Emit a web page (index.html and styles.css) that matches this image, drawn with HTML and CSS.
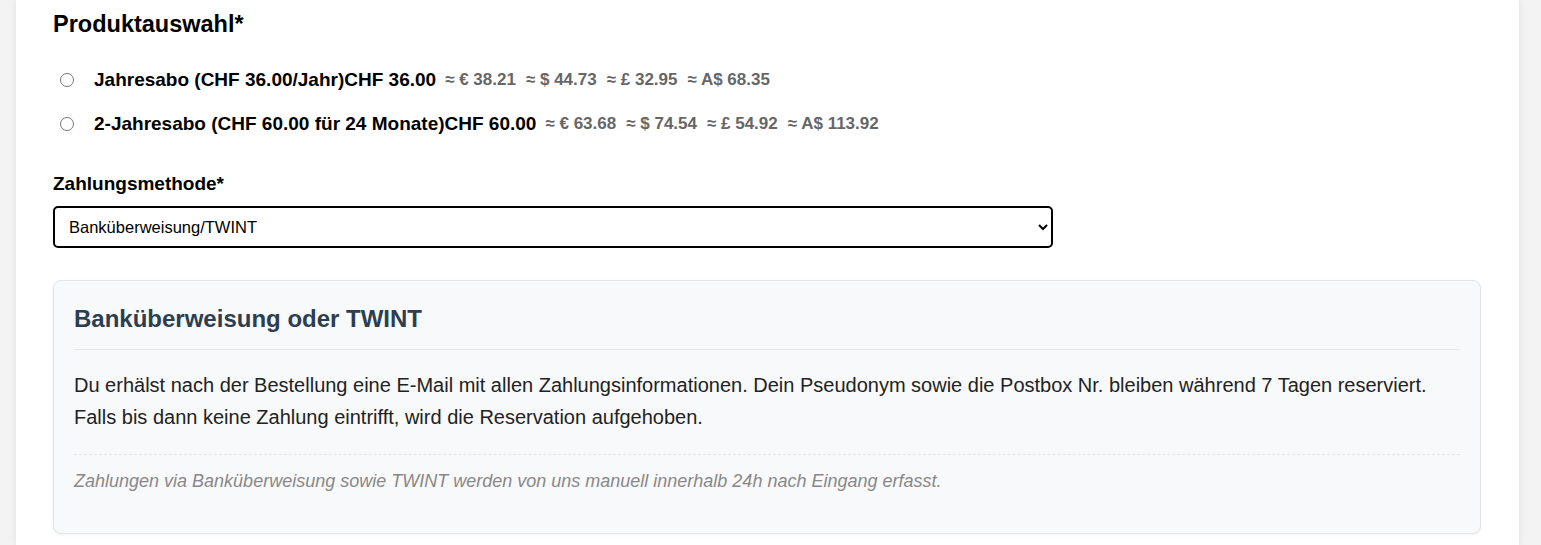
FILE: index.html
```html
<!DOCTYPE html>
<html lang="de">
<head>
<meta charset="utf-8">
<title>Bestellung</title>
<link rel="stylesheet" href="styles.css">
</head>
<body>
<main class="page">
  <section class="card">
    <h2 class="section-title">Produktauswahl*</h2>
    <div class="options">
      <label class="option">
        <input type="radio" name="product" class="radio">
        <span class="option-label">Jahresabo (CHF 36.00/Jahr)CHF 36.00</span>
        <span class="conv">≈ € 38.21</span>
        <span class="conv">≈ $ 44.73</span>
        <span class="conv">≈ £ 32.95</span>
        <span class="conv">≈ A$ 68.35</span>
      </label>
      <label class="option">
        <input type="radio" name="product" class="radio">
        <span class="option-label">2-Jahresabo (CHF 60.00 für 24 Monate)CHF 60.00</span>
        <span class="conv">≈ € 63.68</span>
        <span class="conv">≈ $ 74.54</span>
        <span class="conv">≈ £ 54.92</span>
        <span class="conv">≈ A$ 113.92</span>
      </label>
    </div>
    <label class="field-label" for="pm">Zahlungsmethode*</label>
    <select id="pm" class="select">
      <option>Banküberweisung/TWINT</option>
    </select>
    <div class="info">
      <h3 class="info-title">Banküberweisung oder TWINT</h3>
      <p class="info-text">Du erhälst nach der Bestellung eine E-Mail mit allen Zahlungsinformationen. Dein Pseudonym sowie die Postbox Nr. bleiben während 7 Tagen reserviert. Falls bis dann keine Zahlung eintrifft, wird die Reservation aufgehoben.</p>
      <p class="info-note">Zahlungen via Banküberweisung sowie TWINT werden von uns manuell innerhalb 24h nach Eingang erfasst.</p>
    </div>
  </section>
</main>
</body>
</html>
```
FILE: styles.css
```css
html, body {
  margin: 0;
  padding: 0;
  background: #f3f3f3;
  font-family: "Liberation Sans", Arial, sans-serif;
  color: #000;
}
.page {
  padding-left: 16px;
  width: 1503px;
}
.card {
  background: #fff;
  box-shadow: 0 0 8px rgba(0,0,0,0.08);
  padding: 10px 38px 13px 37px;
  min-height: 545px;
  box-sizing: border-box;
}
.section-title {
  font-size: 23.5px;
  font-weight: bold;
  margin: 0 0 30px;
  line-height: 28px;
}
.options {
  display: flex;
  flex-direction: column;
  gap: 20px;
  margin-bottom: 36px;
}
.option {
  display: flex;
  align-items: center;
  line-height: 24px;
}
.radio {
  margin: 0 20px 0 7px;
  width: 14px;
  height: 14px;
}
.option-label {
  font-size: 19px;
  font-weight: bold;
  margin-right: 4px;
}
.conv {
  font-size: 17px;
  font-weight: bold;
  color: #666;
  margin: 0 5px;
}
.field-label {
  display: block;
  font-size: 19px;
  font-weight: bold;
  line-height: 24px;
  margin-bottom: 10px;
}
.select {
  display: block;
  width: 1000px;
  height: 42px;
  border: 2px solid #000;
  border-radius: 5px;
  background: #fff;
  font-family: "Liberation Sans", Arial, sans-serif;
  font-size: 16.5px;
  padding: 0 10px;
  margin-bottom: 32px;
  color: #000;
}
.info {
  background: #f8f9fa;
  border: 1px solid #e2e4e6;
  border-radius: 8px;
  box-shadow: 0 1px 3px rgba(0,0,0,0.06);
  padding: 20px 20px 41px;
}
.info-title {
  margin: 0;
  font-size: 24px;
  font-weight: bold;
  color: #2c3e50;
  line-height: 36px;
  padding-bottom: 12px;
  border-bottom: 1px solid #e6e8ea;
}
.info-text {
  margin: 0;
  padding: 19px 0 21px;
  font-size: 20px;
  line-height: 32px;
  color: #222;
  border-bottom: 1px dashed #e2e4e6;
}
.info-note {
  margin: 0;
  padding-top: 15px;
  font-size: 18px;
  font-style: italic;
  color: #888;
  line-height: 22px;
}
```
